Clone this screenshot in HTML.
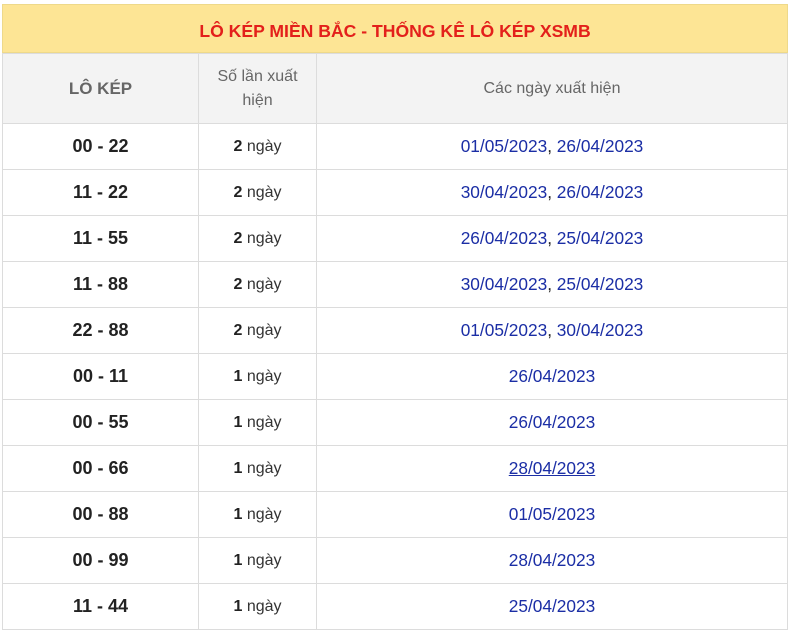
<!DOCTYPE html>
<html><head><meta charset="utf-8"><style>
body{margin:0;background:#fff;font-family:"Liberation Sans",Arial,sans-serif;}
.wrap{position:absolute;left:2px;top:4px;width:786px;}
.title{height:49px;background:#fde595;color:#e3201b;font-weight:bold;font-size:17.6px;text-align:center;line-height:52px;border:1px solid #eed98a;box-sizing:border-box;}
table{border-collapse:collapse;width:786px;table-layout:fixed;}
td,th{border:1px solid #dcdcdc;text-align:center;padding:0;}
th{background:#f3f3f3;height:69px;color:#666;font-weight:normal;font-size:16px;line-height:24px;}
th.a{font-weight:bold;font-size:17px;}
td{height:45px;}
td.a{font-weight:bold;font-size:18px;color:#222;}
td.b{font-size:16px;color:#333;}
td.b b{color:#222;}
td.c{font-size:17.3px;color:#1b2ea5;}
td.c span{color:#222;}
u{text-decoration:underline;}
</style></head><body><div class="wrap">
<div class="title">LÔ KÉP MIỀN BẮC - THỐNG KÊ LÔ KÉP XSMB</div>
<table>
<colgroup><col style="width:196px"><col style="width:118px"><col></colgroup>
<tr><th class="a">LÔ KÉP</th><th>Số lần xuất<br>hiện</th><th>Các ngày xuất hiện</th></tr>
<tr><td class="a">00 - 22</td><td class="b"><b>2</b> ngày</td><td class="c">01/05/2023<span>,</span> 26/04/2023</td></tr>
<tr><td class="a">11 - 22</td><td class="b"><b>2</b> ngày</td><td class="c">30/04/2023<span>,</span> 26/04/2023</td></tr>
<tr><td class="a">11 - 55</td><td class="b"><b>2</b> ngày</td><td class="c">26/04/2023<span>,</span> 25/04/2023</td></tr>
<tr><td class="a">11 - 88</td><td class="b"><b>2</b> ngày</td><td class="c">30/04/2023<span>,</span> 25/04/2023</td></tr>
<tr><td class="a">22 - 88</td><td class="b"><b>2</b> ngày</td><td class="c">01/05/2023<span>,</span> 30/04/2023</td></tr>
<tr><td class="a">00 - 11</td><td class="b"><b>1</b> ngày</td><td class="c">26/04/2023</td></tr>
<tr><td class="a">00 - 55</td><td class="b"><b>1</b> ngày</td><td class="c">26/04/2023</td></tr>
<tr><td class="a">00 - 66</td><td class="b"><b>1</b> ngày</td><td class="c"><u>28/04/2023</u></td></tr>
<tr><td class="a">00 - 88</td><td class="b"><b>1</b> ngày</td><td class="c">01/05/2023</td></tr>
<tr><td class="a">00 - 99</td><td class="b"><b>1</b> ngày</td><td class="c">28/04/2023</td></tr>
<tr><td class="a">11 - 44</td><td class="b"><b>1</b> ngày</td><td class="c">25/04/2023</td></tr>
</table></div></body></html>
